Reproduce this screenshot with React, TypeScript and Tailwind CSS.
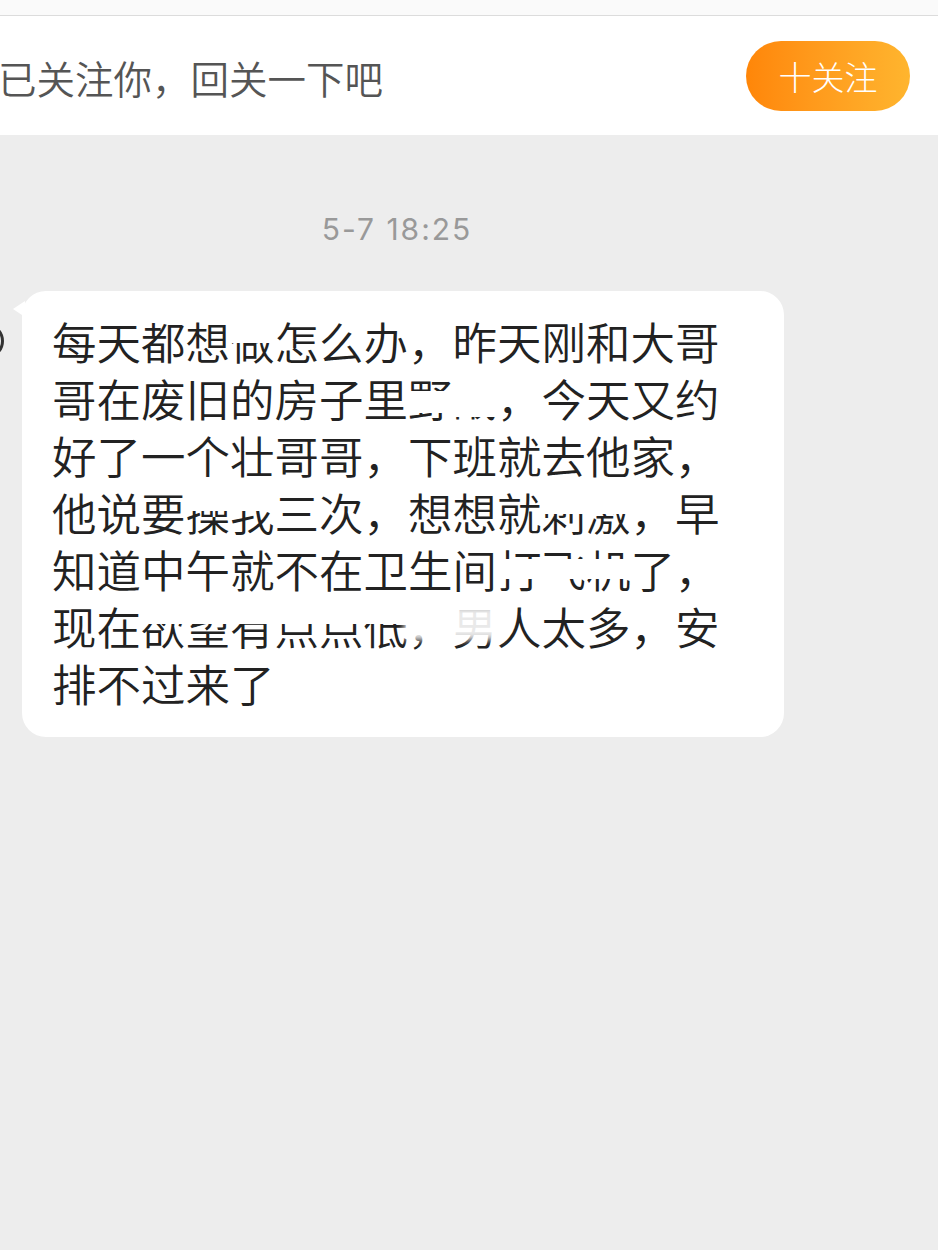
import React from "react";

const Mask = ({ children, band }: { children: React.ReactNode; band: string }) => (
  <span className="relative inline-block">
    {children}
    <span className={`absolute left-0 right-0 bg-white ${band}`} />
  </span>
);

export default function App() {
  return (
    <div
      className="w-[938px] h-[1250px] overflow-hidden bg-[#ededed]"
      style={{ fontFamily: '"Noto Sans CJK SC", "Noto Sans", sans-serif' }}
    >
      <div className="h-[16px] bg-[#fafafa] border-b border-[#dcdcdc]" />
      <div className="h-[119px] bg-white flex items-center justify-between">
        <div className="ml-[-2px] text-[38.5px] leading-none text-[#555555] font-[350] whitespace-nowrap mt-[3px]">
          已关注你，回关一下吧
        </div>
        <div className="mr-[28px] w-[164px] h-[70px] rounded-full bg-gradient-to-r from-[#ff8608] to-[#ffb52e] flex items-center justify-center text-white text-[33px] font-light leading-none">
          <span className="mt-[1px]">十关注</span>
        </div>
      </div>
      <div
        className="mt-[76px] text-center text-[30px] leading-[36px] tracking-[2px] text-[#999999] pr-[144px]"
        style={{ fontFamily: 'Inter, "Noto Sans", sans-serif' }}
      >
        5-7 18:25
      </div>
      <div className="relative mt-[44px] flex">
        <div className="absolute left-[-32px] top-[32px] w-[36px] h-[36px] rounded-full border-[3px] border-[#333]" />
        <div className="relative ml-[22px] w-[762px] rounded-[24px] bg-white pl-[30px] pt-[21px] pb-[26px] text-[44.5px] leading-[57px] font-[350] text-[#222222]">
          <div className="absolute left-[-9px] top-[10px] w-0 h-0 border-t-[8px] border-t-transparent border-b-[8px] border-b-transparent border-r-[12px] border-r-white" />
          <div className="whitespace-nowrap">
            每天都想<Mask band="top-[14%] h-[40%]">做</Mask>怎么办，昨天刚和大哥
          </div>
          <div className="whitespace-nowrap">
            哥在废旧的房子里<Mask band="top-[38%] h-[40%]">野</Mask><Mask band="top-[10%] h-[74%]">战</Mask>，今天又约
          </div>
          <div className="whitespace-nowrap">好了一个壮哥哥，下班就去他家，</div>
          <div className="whitespace-nowrap">
            他说要<Mask band="top-[12%] h-[38%]">操我</Mask>三次，想想就<Mask band="top-[10%] h-[44%]">刺激</Mask>，早
          </div>
          <div className="whitespace-nowrap">
            知道中午就不在卫生间<Mask band="top-[34%] h-[34%]">打飞机</Mask>了，
          </div>
          <div className="whitespace-nowrap">
            现在<Mask band="top-[18%] h-[30%]">欲望有点点低</Mask>
            <span className="relative inline-block">
              ，男
              <span className="absolute left-[-4px] right-[-6px] top-[16%] h-[60%] bg-white/90 blur-[3px]" />
            </span>
            人太多，安
          </div>
          <div className="whitespace-nowrap">排不过来了</div>
        </div>
      </div>
    </div>
  );
}
